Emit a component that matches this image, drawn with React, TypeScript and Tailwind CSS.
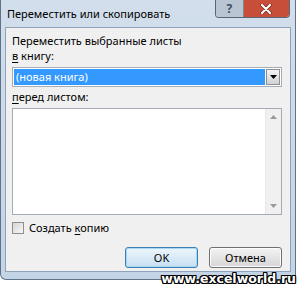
import React from 'react'

const font = { fontFamily: '"Noto Sans", "Open Sans", sans-serif' }

function Arrow({ up }: { up?: boolean }) {
  return (
    <svg width="7" height="4" viewBox="0 0 7 4">
      <path d={up ? 'M0 4 L3.5 0 L7 4 Z' : 'M0 0 L3.5 4 L7 0 Z'} fill="#9a9a9a" />
    </svg>
  )
}

function CloseX() {
  return (
    <svg width="12" height="10" viewBox="0 0 12 10">
      <path d="M2 1 L10 9 M10 1 L2 9" stroke="#6b2116" strokeWidth="3.4" strokeLinecap="round" />
      <path d="M2 1 L10 9 M10 1 L2 9" stroke="#ffffff" strokeWidth="2.2" strokeLinecap="round" />
    </svg>
  )
}

export default function App() {
  return (
    <div className="relative w-[298px] h-[286px] bg-white overflow-hidden" style={font}>
      {/* window frame */}
      <div className="flex flex-col w-[296px] h-[280px] rounded-b-[6px] border border-[#5f7288] border-t-0 bg-linear-to-b from-[#d2deeb] to-[#c3d4e7] px-[4px]">
        {/* title bar */}
        <div className="flex h-[27px] items-start justify-between">
          <div className="pl-[2px] pt-[7px] text-[11px] leading-[14px] text-black">
            Переместить или скопировать
          </div>
          <div className="mr-[1px] flex h-[18px] w-[75px] shrink-0 overflow-hidden rounded-b-[4px] border border-t-0 border-[#5b6675]">
            <div className="flex h-[17px] w-[28px] items-center justify-center border-r border-[#7a8694] bg-[#b9c5d3] text-[12px] font-bold leading-none text-[#3f4f63]">
              ?
            </div>
            <div className="flex h-[17px] w-[46px] items-center justify-center bg-[#c74f39]">
              <CloseX />
            </div>
          </div>
        </div>
        {/* client area */}
        <div className="flex h-[245px] flex-col border border-[#8ea3ba] bg-[#f0f0f0] pl-[6px] pr-[2px] text-[11px] leading-[14px] text-black">
          <div className="pt-[6px]">Переместить выбранные листы</div>
          <div className="mt-[1px]">
            <span className="underline underline-offset-2">в</span> книгу:
          </div>
          <div className="mt-[4px] flex h-[20px] w-[270px] border border-[#a5acb5] bg-white p-[1px]">
            <div className="flex flex-1 items-center bg-[#3399ff] pl-[2px] text-white">(новая книга)</div>
            <div className="ml-[1px] flex w-[14px] items-center justify-center border border-[#8e8f8f] bg-linear-to-b from-[#f4f4f4] to-[#d2d2d2]">
              <svg width="7" height="4" viewBox="0 0 7 4">
                <path d="M0 0 L3.5 4 L7 0 Z" fill="#000" />
              </svg>
            </div>
          </div>
          <div className="mt-[3px]">
            <span className="underline underline-offset-2">п</span>еред листом:
          </div>
          <div className="mt-[4px] flex h-[107px] w-[270px] border border-[#a5acb5] bg-white">
            <div className="flex-1" />
            <div className="flex w-[16px] flex-col items-center justify-between border-l border-[#e8e8e8] bg-[#f0f0f0] py-[6px]">
              <Arrow up />
              <Arrow />
            </div>
          </div>
          <div className="mt-[6px] flex items-center gap-[5px]">
            <div className="h-[12px] w-[12px] border border-[#8f8f8f] bg-linear-to-br from-[#d6d6d6] to-[#f8f8f8]" />
            <span>
              Создать <span className="underline underline-offset-2">к</span>опию
            </span>
          </div>
          <div className="mt-[12px] flex justify-end gap-[11px] pr-[6px]">
            <div className="flex h-[21px] w-[73px] items-center justify-center rounded-[3px] border border-[#3c7fb1] bg-linear-to-b from-[#eef6fb] to-[#c6dff2] shadow-[inset_0_0_0_1px_#a6d8f5]">
              OK
            </div>
            <div className="flex h-[21px] w-[73px] items-center justify-center rounded-[3px] border border-[#707070] bg-linear-to-b from-[#f3f3f3] to-[#d6d6d6] shadow-[inset_0_0_0_1px_#fcfcfc]">
              Отмена
            </div>
          </div>
        </div>
      </div>
      {/* watermark */}
      <div
        className="absolute right-[2px] bottom-[1px] text-[12.5px] font-black leading-[13px] text-white"
        style={{
          fontFamily: '"DejaVu Sans", sans-serif',
          textShadow:
            '1px 0 0 #000, -1px 0 0 #000, 0 1px 0 #000, 0 -1px 0 #000, 1px 1px 0 #000, -1px -1px 0 #000, 1px -1px 0 #000, -1px 1px 0 #000',
        }}
      >
        www.excelworld.ru
      </div>
    </div>
  )
}
